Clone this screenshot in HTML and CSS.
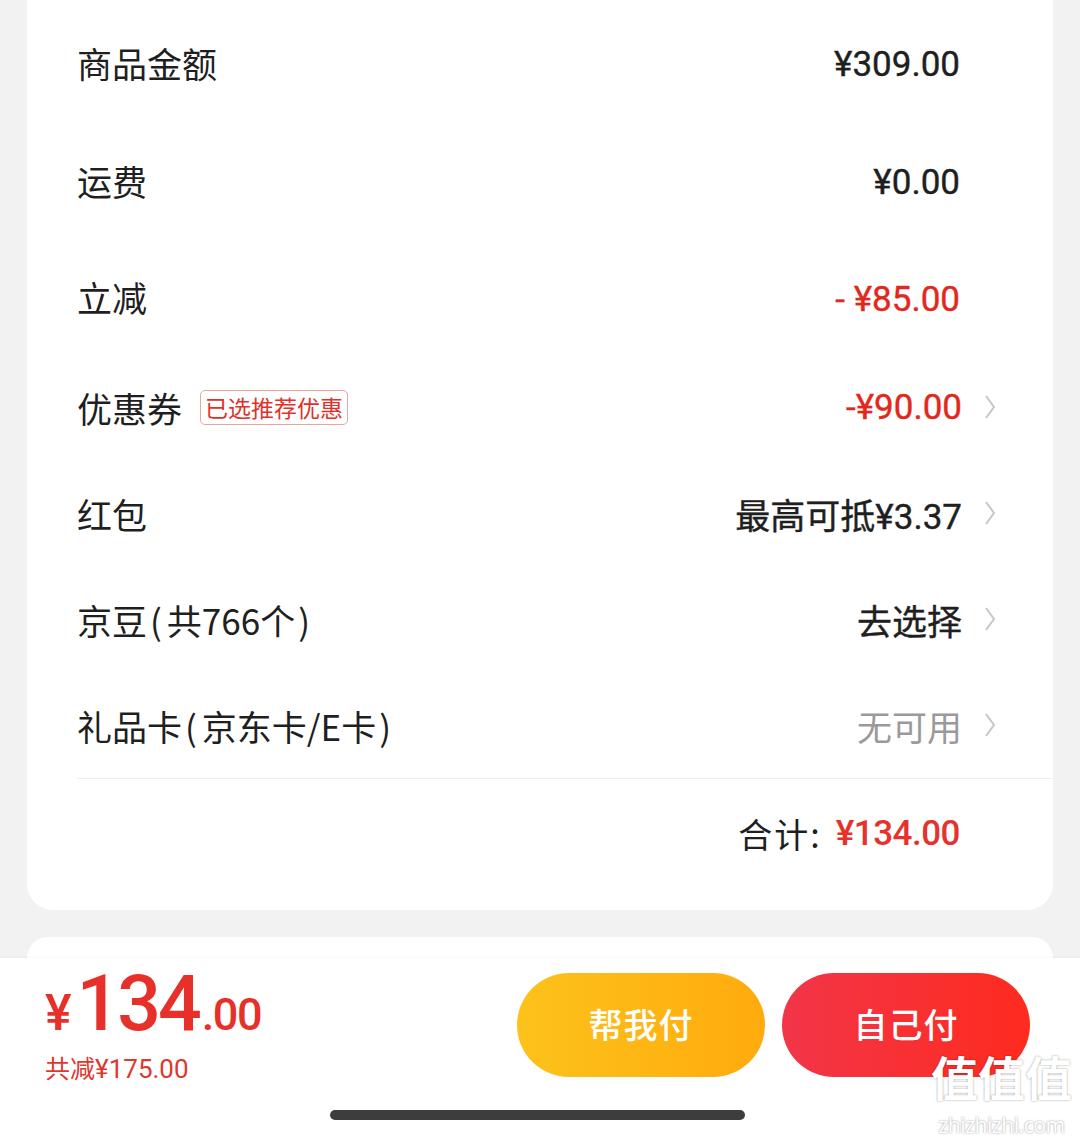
FILE: index.html
```html
<!DOCTYPE html>
<html lang="zh-CN">
<head>
    <meta charset="UTF-8">
    <meta name="viewport" content="width=device-width, initial-scale=1.0">
    <link rel="stylesheet" href="styles.css">
</head>
<body>
    <div class="page">
        <div class="summary-card">
            <div class="row row-a">
                <div class="label">商品金额</div>
                <div class="value plain">¥309.00</div>
            </div>
            <div class="row row-a">
                <div class="label">运费</div>
                <div class="value plain">¥0.00</div>
            </div>
            <div class="row row-b">
                <div class="label">立减</div>
                <div class="value plain red">- ¥85.00</div>
            </div>
            <div class="row">
                <div class="label">优惠券<span class="tag">已选推荐优惠</span></div>
                <div class="value red">-¥90.00</div>
                <svg class="chevron" viewBox="0 0 12 26"><polyline points="2,2 10,13 2,24"/></svg>
            </div>
            <div class="row">
                <div class="label">红包</div>
                <div class="value">最高可抵¥3.37</div>
                <svg class="chevron" viewBox="0 0 12 26"><polyline points="2,2 10,13 2,24"/></svg>
            </div>
            <div class="row">
                <div class="label">京豆<span class="paren">(</span>共766个<span class="paren">)</span></div>
                <div class="value">去选择</div>
                <svg class="chevron" viewBox="0 0 12 26"><polyline points="2,2 10,13 2,24"/></svg>
            </div>
            <div class="row">
                <div class="label">礼品卡<span class="paren">(</span>京东卡/E卡<span class="paren">)</span></div>
                <div class="value muted">无可用</div>
                <svg class="chevron" viewBox="0 0 12 26"><polyline points="2,2 10,13 2,24"/></svg>
            </div>
            <div class="total-row">
                <span class="total-label">合计:</span>
                <span class="total-value">¥134.00</span>
            </div>
        </div>

        <div class="next-card"></div>

        <div class="paybar">
            <div class="paybar-main">
                <div class="price-block">
                    <div class="big-price"><span class="yen">¥</span><span class="int">134</span><span class="dec">.00</span></div>
                    <div class="saved">共减<span class="num">¥175.00</span></div>
                </div>
                <div class="btn-group">
                    <button class="pay-btn friend">帮我付</button>
                    <button class="pay-btn self">自己付</button>
                </div>
            </div>
            <div class="home-indicator"></div>
            <div class="watermark">
                <div class="wm-big">值值值</div>
                <div class="wm-small">zhizhizhi.com</div>
            </div>
        </div>
    </div>
</body>
</html>
```

FILE: styles.css
```css
body {
    margin: 0;
    background: #f2f2f2;
    font-family: "Noto Sans CJK SC", "Noto Sans", sans-serif;
    color: #1f1f1f;
}
.page {
    width: 1080px;
    height: 1138px;
    overflow: hidden;
    position: relative;
}
.summary-card {
    margin: 0 27px;
    background: #fff;
    border-radius: 0 0 26px 26px;
    padding: 3px 0 23px 50px;
}
.row {
    display: flex;
    align-items: center;
    height: 106px;
    padding-right: 57px;
}
.row-a {
    height: 118px;
}
.row-b {
    height: 115px;
}
.label {
    flex: 1;
    display: flex;
    align-items: center;
    font-size: 35px;
    color: #1f1f1f;
}
.paren {
    margin: 0 5px 0 3px;
}
.tag {
    margin-left: 18px;
    font-size: 23px;
    line-height: 33px;
    padding: 0 4px;
    color: #e0322a;
    border: 1px solid #eaa79e;
    border-radius: 5px;
}
.value {
    font-family: Roboto, "Noto Sans CJK SC", sans-serif;
    font-size: 35px;
    font-weight: 400;
    color: #1f1f1f;
    -webkit-text-stroke: 0.4px currentColor;
}
.value.plain {
    margin-right: 36px;
    padding-top: 5px;
}
.value.red {
    color: #e2281c;
}
.value.muted {
    color: #9a9a9a;
    -webkit-text-stroke: 0;
}
.chevron {
    width: 12px;
    height: 26px;
    margin-left: 22px;
    fill: none;
    stroke: #c6c6c6;
    stroke-width: 2;
}
.total-row {
    height: 108px;
    border-top: 1px solid #efefef;
    display: flex;
    align-items: center;
    justify-content: flex-end;
    padding-right: 93px;
}
.total-label {
    font-size: 34px;
    letter-spacing: 2px;
    margin-right: 14px;
}
.total-value {
    font-family: Roboto, sans-serif;
    font-size: 35px;
    font-weight: 500;
    letter-spacing: -0.5px;
    color: #e5322d;
}
.next-card {
    margin: 27px 27px 0;
    height: 21px;
    background: #fff;
    border-radius: 26px 26px 0 0;
}
.paybar {
    position: relative;
    height: 180px;
    background: #fff;
    box-shadow: 0 -1px 2px rgba(0,0,0,0.03);
    padding: 15px 50px 0 45px;
    box-sizing: border-box;
}
.paybar-main {
    display: flex;
    align-items: center;
    justify-content: space-between;
    height: 104px;
}
.price-block {
    color: #e8302b;
    padding-top: 6px;
}
.big-price {
    font-family: Roboto, sans-serif;
    font-weight: 500;
    line-height: 64px;
    display: flex;
    align-items: baseline;
}
.yen {
    font-size: 50px;
    margin-right: 5px;
}
.int {
    font-size: 77px;
    letter-spacing: -3px;
    margin-right: 3px;
}
.dec {
    font-size: 45px;
    letter-spacing: -1.5px;
}
.saved {
    font-size: 25px;
    color: #e0372d;
    margin-top: 2px;
}
.saved .num {
    font-family: Roboto, sans-serif;
    font-size: 26px;
}
.btn-group {
    display: flex;
    gap: 17px;
}
.pay-btn {
    width: 248px;
    height: 104px;
    border: none;
    border-radius: 52px;
    color: #fff;
    font-family: "Noto Sans CJK SC", sans-serif;
    font-size: 34px;
    font-weight: 500;
    letter-spacing: 1px;
    padding-bottom: 4px;
}
.pay-btn.friend {
    background: linear-gradient(90deg, #fdc21b, #ffab0d);
}
.pay-btn.self {
    background: linear-gradient(90deg, #f23549, #fe2b1e);
}
.home-indicator {
    width: 415px;
    height: 10px;
    border-radius: 5px;
    background: #3d3d3d;
    margin: 33px auto 0;
}
.watermark {
    position: absolute;
    right: 8px;
    top: 93px;
    text-align: center;
    color: #fff;
    text-shadow: 0 0 2px rgba(0,0,0,0.45);
}
.wm-big {
    font-size: 47px;
    line-height: 50px;
    font-weight: 700;
}
.wm-small {
    font-family: "Noto Sans", sans-serif;
    font-size: 21px;
    line-height: 24px;
    margin-top: 12px;
    letter-spacing: -0.5px;
}
```
